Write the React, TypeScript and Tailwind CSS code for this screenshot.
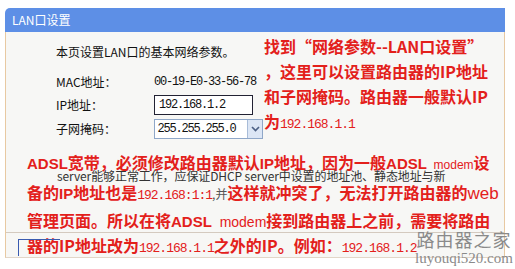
const red = 'text-[#e3201b]';

const Bold = ({ children }: { children: React.ReactNode }) => (
  <span className="font-bold">{children}</span>
);

const Latin = ({ children, size }: { children: React.ReactNode; size: string }) => (
  <span className={`font-['Liberation_Sans',sans-serif] ${size}`}>{children}</span>
);

const Num = ({ children }: { children: React.ReactNode }) => (
  <span className="font-['Liberation_Mono',monospace] text-[13px] font-normal tracking-[-1px]">
    {children}
  </span>
);

export default function App() {
  return (
    <div className="relative h-[269px] w-[515px] overflow-hidden bg-white pt-[8px] pl-[5px] font-['Noto_Sans_CJK_SC',sans-serif]">
      <div className="w-[500px]">
        {/* header */}
        <div className="flex h-[24px] items-center rounded-tl-[5px] bg-[#5d8fe6] pl-[7px] text-[12px] text-white">
          LAN口设置
        </div>

        <div className="border-x border-b border-x-[#e8c9a2] border-b-[#e2d6c8] bg-[#f7f7f5]">
          {/* top area */}
          <div className="flex h-[107px]">
            <div className="w-[257px] pt-[12px] pl-[50px] text-[12px] text-[#111]">
              <div className="h-[16px] leading-[16px]">本页设置LAN口的基本网络参数。</div>
              <div className="mt-[14px] flex h-[16px] items-center">
                <span className="w-[98px]">MAC地址：</span>
                <span className="font-['Liberation_Mono',monospace] tracking-[-1.2px]">00-19-E0-33-56-78</span>
              </div>
              <div className="mt-[4px] flex h-[21px] items-center">
                <span className="w-[98px]">IP地址：</span>
                <span className="flex h-[20px] w-[99px] items-center border border-[#223] bg-white pl-[4px] font-['Liberation_Mono',monospace] tracking-[-1.2px]">
                  192.168.1.2
                </span>
              </div>
              <div className="mt-[3px] flex h-[21px] items-center">
                <span className="w-[98px]">子网掩码：</span>
                <span className="flex h-[20px] w-[110px] items-center border border-[#8fa7c8] bg-white pl-[3px] font-['Liberation_Mono',monospace] tracking-[-1.2px]">
                  <span className="flex-1">255.255.255.0</span>
                  <span className="flex h-[18px] w-[15px] items-center justify-center border-l border-[#a8bcd8] bg-[#dce6f5]">
                    <svg width="9" height="6" viewBox="0 0 9 6">
                      <path d="M1 1 L4.5 4.5 L8 1" fill="none" stroke="#4d6185" strokeWidth="1.6" />
                    </svg>
                  </span>
                </span>
              </div>
            </div>
            <div className={`pt-[2px] pl-[1px] text-[16px] font-bold leading-[25px] ${red}`}>
              <div className="h-[25px]">找到“网络参数--LAN口设置”</div>
              <div className="h-[25px]">，这里可以设置路由器的IP地址</div>
              <div className="h-[25px]">和子网掩码。路由器一般默认IP</div>
              <div className="h-[25px]">
                为<Num>192.168.1.1</Num>
              </div>
            </div>
          </div>

          {/* lower paragraph */}
          <div className={`pl-[21px] text-[16px] whitespace-nowrap ${red}`}>
            <div className="mt-[11px] h-[24px] leading-[24px]">
              <Latin size="text-[15px] font-bold">ADSL</Latin>
              <Bold>宽带，必须修改路由器默认</Bold>
              <Latin size="text-[15px] font-bold">IP</Latin>
              <Bold>地址，因为一般</Bold>
              <Latin size="text-[15px] font-bold">ADSL</Latin>
              <Latin size="text-[12px]">&nbsp;&nbsp;modem</Latin>
              <Bold>设</Bold>
            </div>
            <div className="-mt-[4px] h-[12px] pl-[30px] text-[12px] leading-[12px] tracking-[-0.1px] text-[#333]">
              server能够正常工作，应保证DHCP server中设置的地址池、静态地址与新
            </div>
            <div className="h-[21px] leading-[21px]">
              <Bold>备的</Bold>
              <Latin size="text-[15px] font-bold">IP</Latin>
              <Bold>地址也是</Bold>
              <Num>192.168:1:1</Num>
              <span className="text-[12px] text-[#555]">,并</span>
              <Bold>这样就冲突了，无法打开路由器的</Bold>
              <Latin size="text-[17px]">web</Latin>
            </div>
            <div className="mt-[5px] h-[24px] leading-[24px]">
              <Bold>管理页面。所以在将</Bold>
              <Latin size="text-[15px] font-bold">ADSL</Latin>
              <Latin size="text-[14px]">&nbsp;&nbsp;modem</Latin>
              <Bold>接到路由器上之前，需要将路由</Bold>
            </div>
          </div>

          {/* bottom row */}
          <div className={`relative h-[25px] border-t border-[#d4cabf] pl-[21px] text-[16px] leading-[24px] whitespace-nowrap ${red}`}>
            <span className="absolute top-[6px] left-[12px] h-[17px] w-[42px] border-t border-l border-[#3a5bb0]" />
            <Bold>器的IP地址改为</Bold>
            <Num>192.168.1.1</Num>
            <Bold>之外的IP。例如：</Bold>
            <Num>192.168.1.2</Num>
          </div>
        </div>
      </div>

      {/* watermark */}
      <div className="absolute top-[229px] left-[415px] flex w-[98px] flex-col items-center text-[#8a8a8a]">
        <span className="text-[18px] leading-[21px] tracking-[1px]">路由器之家</span>
        <span className="font-['Liberation_Serif',serif] text-[15px] leading-[16px]">luyouqi520.com</span>
      </div>
    </div>
  );
}
